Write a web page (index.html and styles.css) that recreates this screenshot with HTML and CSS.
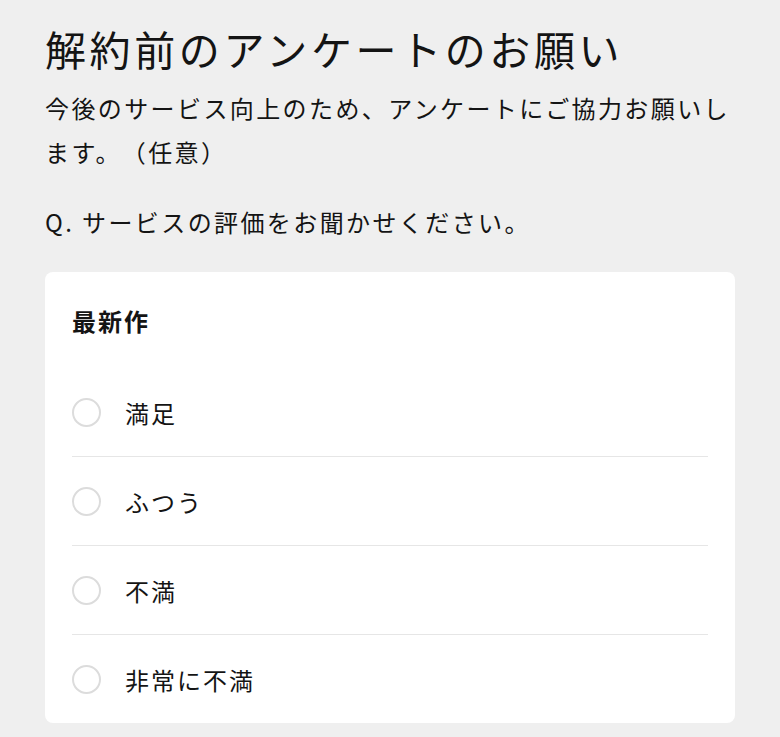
FILE: index.html
```html
<!DOCTYPE html>
<html lang="ja">
<head>
  <meta charset="UTF-8" />
  <meta name="viewport" content="width=device-width, initial-scale=1.0"/>
  <title>解約前のアンケート</title>
  <link rel="stylesheet" href="styles.css">
</head>
<body>

  <main class="anketo">
    <h1>解約前のアンケートのお願い</h1>
    <p class="lead">今後のサービス向上のため、アンケートにご協力お願いします。（任意）</p>
    <p class="frage">Q. サービスの評価をお聞かせください。</p>

    <!-- Auswahl -->
    <div class="karte">
      <h3>最新作</h3>
      <label class="option">
        <input type="radio" name="bewertung" value="1" />
        <span class="kreis"></span>
        <span>満足</span>
      </label>
      <label class="option">
        <input type="radio" name="bewertung" value="2" />
        <span class="kreis"></span>
        <span>ふつう</span>
      </label>
      <label class="option">
        <input type="radio" name="bewertung" value="3" />
        <span class="kreis"></span>
        <span>不満</span>
      </label>
      <label class="option">
        <input type="radio" name="bewertung" value="4" />
        <span class="kreis"></span>
        <span>非常に不満</span>
      </label>
    </div>
  </main>

</body>
</html>
```

FILE: styles.css
```css
body {
  font-family: "Noto Sans CJK JP", "Noto Sans", sans-serif;
  background-color: #efefef;
  color: #141414;
  margin: 0;
  text-spacing-trim: space-all;
}
.anketo {
  width: 690px;
  padding: 20px 45px 0;
}
h1 {
  font-size: 41px;
  font-weight: 400;
  letter-spacing: 3.6px;
  line-height: 56px;
  margin: 0;
  white-space: nowrap;
}
.lead {
  font-size: 24px;
  letter-spacing: 2.4px;
  line-height: 44px;
  margin: 10px 0 0;
}
.frage {
  font-size: 24px;
  letter-spacing: 2.4px;
  line-height: 44px;
  margin: 26px 0 0;
}
.karte {
  background: #fff;
  border-radius: 8px;
  margin-top: 28px;
  padding: 0 27px;
}
.karte h3 {
  font-size: 24px;
  font-weight: 700;
  letter-spacing: 2px;
  line-height: 40px;
  margin: 0;
  padding: 29px 0 27px;
}
.option {
  display: flex;
  align-items: center;
  gap: 24px;
  height: 88px;
  border-bottom: 1px solid #e6e6e6;
  font-size: 24px;
  letter-spacing: 2px;
  cursor: pointer;
}
.option:last-child {
  border-bottom: none;
}
.option input {
  display: none;
}
.kreis {
  width: 25px;
  height: 25px;
  border: 2px solid #dcdcdc;
  border-radius: 50%;
  flex-shrink: 0;
}
```
